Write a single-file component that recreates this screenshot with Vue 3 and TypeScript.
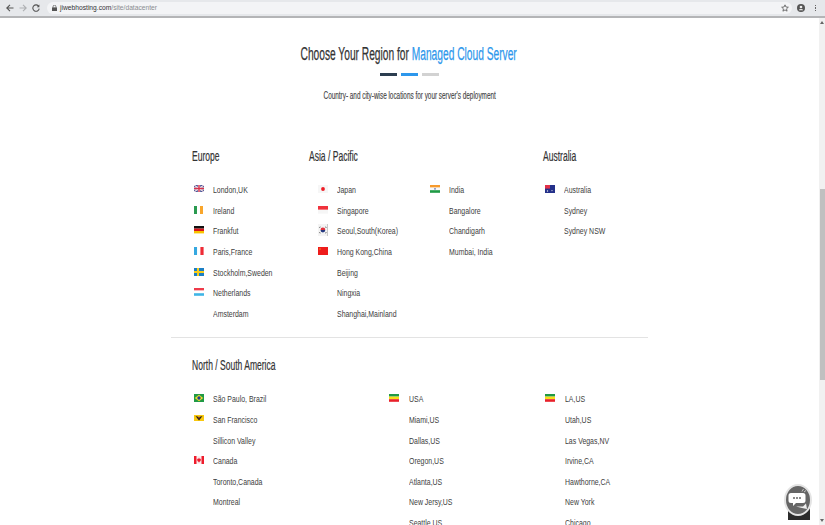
<script setup lang="ts">
type Shape = [string, string]
const rect = (x: number, y: number, w: number, h: number) => `M${x} ${y}h${w}v${h}h${-w}z`
const disc = (cx: number, cy: number, r: number) => `M${cx - r} ${cy}a${r} ${r} 0 1 0 ${r * 2} 0a${r} ${r} 0 1 0 ${-r * 2} 0z`

const flags: Record<string, Shape[]> = {
  uk: [
    ['#3f4f94', rect(0, 0, 10, 7)],
    ['#f4dfe4', 'M0 0l1 0 9 6.2v.8h-1L0 .8zM10 0v.8L1 7H0v-.8L9 0z'],
    ['#f4e6ea', rect(3.8, 0, 2.4, 7)],
    ['#f4e6ea', rect(0, 2.3, 10, 2.4)],
    ['#d8324a', rect(4.3, 0, 1.4, 7)],
    ['#d8324a', rect(0, 2.8, 10, 1.4)]
  ],
  ie: [
    ['#2a9a50', rect(0, 0, 3, 8)],
    ['#ffffff', rect(3, 0, 3, 8)],
    ['#f9a62b', rect(6, 0, 3, 8)]
  ],
  de: [
    ['#111111', rect(0, 0, 10, 2.6)],
    ['#d8141c', rect(0, 2.6, 10, 2.4)],
    ['#f8c400', rect(0, 5, 10, 2.4)]
  ],
  fr: [
    ['#35a8e0', rect(0, 0, 3.2, 8)],
    ['#ffffff', rect(3.2, 0, 3.2, 8)],
    ['#ee2b36', rect(6.4, 0, 3.2, 8)]
  ],
  se: [
    ['#1c7fc4', rect(0, 0, 10, 8)],
    ['#f8cd1c', rect(3, 0, 2, 8)],
    ['#f8cd1c', rect(0, 3, 10, 2)]
  ],
  lu: [
    ['#ee3b4a', rect(0, 0, 10, 2.6)],
    ['#ffffff', rect(0, 2.6, 10, 2.6)],
    ['#3fb5e6', rect(0, 5.2, 10, 2.6)]
  ],
  jp: [
    ['#f6f6f6', rect(0, 0, 10, 8)],
    ['#ee1c25', disc(5, 4, 1.9)]
  ],
  sg: [
    ['#f0323c', rect(0, 0, 10, 3.8)],
    ['#f6f6f6', rect(0, 3.8, 10, 3.8)]
  ],
  kr: [
    ['#f4f4f4', rect(0, 0, 9, 12)],
    ['#c9c9c9', rect(9, 0, 1, 12)],
    ['#e0303c', 'M2.5 6a2.4 2.4 0 0 1 4.8 0z'],
    ['#24387f', 'M2.5 6a2.4 2.4 0 0 0 4.8 0z'],
    ['#555555', 'M1 3.5l1.2-1 .5.5-1.2 1zM7 3l.5-.5 1.2 1-.5.5zM1 8.5l.5-.5 1.2 1-.5.5zM7 9l1.2-1 .5.5-1.2 1z']
  ],
  cn: [
    ['#ee1c1c', rect(0, 0, 10, 8)],
    ['#f6a81c', disc(2, 2, .7)]
  ],
  in: [
    ['#f79a2c', rect(0, 0, 10, 2.6)],
    ['#f8f8f8', rect(0, 2.6, 10, 2.6)],
    ['#1f9a45', rect(0, 5.2, 10, 2.6)],
    ['#5566aa', disc(5, 3.9, .8)]
  ],
  au: [
    ['#24308a', rect(0, 0, 10, 8)],
    ['#e03048', rect(0, 0, 5, 3.6)],
    ['#e8e8f0', disc(7, 5.6, .6)],
    ['#e8e8f0', disc(2.5, 6, .7)]
  ],
  br: [
    ['#1f9a45', rect(0, 0, 10, 8)],
    ['#f4dc2c', 'M5 .8 9.2 4 5 7.2.8 4z'],
    ['#1d3f8f', disc(5, 4, 1.7)]
  ],
  ca: [
    ['#ee1c2c', rect(0, 0, 10, 8)],
    ['#fbeff0', rect(2.5, 0, 5, 8)],
    ['#ee1c2c', 'M5 1.5 5.8 3 7 2.7 6.5 4.4l.5.4L5.2 6v.8h-.4V6L3 4.8l.5-.4L3 2.7 4.2 3z']
  ],
  us: [
    ['#1f9a45', rect(0, 0, 10, 2.6)],
    ['#f7e017', rect(0, 2.6, 10, 2.6)],
    ['#e8202a', rect(0, 5.2, 10, 2.6)]
  ],
  sf: [
    ['#f9c80e', rect(0, 0, 10, 6)],
    ['#222222', 'M1.5 1 5 2 8.500 1 6.600 3.400 5 5.500 3.400 3.400z'],
    ['#c8501c', rect(4.3, 2, 1.4, 1.2)]
  ]
}

interface Place { name: string; flag?: string }
const list = (...items: (string | [string, string])[]): Place[] =>
  items.map((i) => (Array.isArray(i) ? { name: i[0], flag: i[1] } : { name: i }))

const regionsTop = [
  {
    title: 'Europe',
    kind: 'europe',
    lists: [list(['London,UK', 'uk'], ['Ireland', 'ie'], ['Frankfut', 'de'], ['Paris,France', 'fr'], ['Stockholm,Sweden', 'se'], ['Netherlands', 'lu'], 'Amsterdam')]
  },
  {
    title: 'Asia / Pacific',
    kind: 'asia',
    lists: [
      list(['Japan', 'jp'], ['Singapore', 'sg'], ['Seoul,South(Korea)', 'kr'], ['Hong Kong,China', 'cn'], 'Beijing', 'Ningxia', 'Shanghai,Mainland'),
      list(['India', 'in'], 'Bangalore', 'Chandigarh', 'Mumbai, India')
    ]
  },
  {
    title: 'Australia',
    kind: 'oz',
    lists: [list(['Australia', 'au'], 'Sydney', 'Sydney NSW')]
  }
]

const americas = [
  list(['São Paulo, Brazil', 'br'], ['San Francisco', 'sf'], 'Sillicon Valley', ['Canada', 'ca'], 'Toronto,Canada', 'Montreal'),
  list(['USA', 'us'], 'Miami,US', 'Dallas,US', 'Oregon,US', 'Atlanta,US', 'New Jersy,US', 'Seattle,US'),
  list(['LA,US', 'us'], 'Utah,US', 'Las Vegas,NV', 'Irvine,CA', 'Hawthorne,CA', 'New York', 'Chicago')
]
</script>

<template>
  <div class="window">
    <header class="chrome">
      <svg class="nav" width="8" height="8" viewBox="0 0 8 8"><path d="M7.5 4H1M4 .8.8 4 4 7.2" fill="none" stroke="#555" stroke-width="1.1" /></svg>
      <svg class="nav" width="8" height="8" viewBox="0 0 8 8"><path d="M.5 4H7M4 .8 7.2 4 4 7.2" fill="none" stroke="#aeb0b3" stroke-width="1.1" /></svg>
      <svg class="nav" width="8" height="8" viewBox="0 0 8 8"><path d="M6.8 2.4A3.2 3.2 0 1 0 7.2 4.6" fill="none" stroke="#555" stroke-width="1.1" /><path d="M7.4.6v2.6H4.8z" fill="#555" /></svg>
      <div class="omnibox">
        <svg class="lock" width="5" height="6" viewBox="0 0 5 6"><path d="M0 2.4h5V6H0z" fill="#555" /><path d="M1.1 2.6V1.6a1.4 1.4 0 0 1 2.8 0v1" fill="none" stroke="#555" stroke-width=".7" /></svg>
        <span class="url">jiwebhosting.com<span class="path">/site/datacenter</span></span>
        <svg class="star" width="8" height="8" viewBox="0 0 24 24"><path d="M12 2.5l2.9 6.5 7.1.7-5.4 4.7 1.6 7L12 17.8 5.800 21.500l1.600-7L2 9.700 9.100 9z" fill="none" stroke="#555" stroke-width="2.400" /></svg>
      </div>
      <svg class="avatar" width="8" height="8" viewBox="0 0 8 8"><circle cx="4" cy="4" r="4" fill="#555" /><circle cx="4" cy="3" r="1.300" fill="#eee" /><path d="M1.700 6.200a2.400 1.800 0 0 1 4.600 0z" fill="#eee" /></svg>
      <div class="menu"><i></i><i></i><i></i></div>
    </header>

    <div class="viewport">
      <main class="page">
        <h1 class="title"><span class="squeeze">Choose Your Region for <span class="accent">Managed Cloud Server</span></span></h1>
        <div class="bars"><i class="dark"></i><i class="blue"></i><i class="light"></i></div>
        <p class="sub"><span class="squeeze">Country- and city-wise locations for your server's deployment</span></p>

        <div class="container">
          <section class="row top">
            <div v-for="r in regionsTop" :key="r.title" class="region" :class="r.kind">
              <h2 class="region-title"><span class="squeeze-left">{{ r.title }}</span></h2>
              <div class="lists">
                <ul v-for="(l, li) in r.lists" :key="li" class="places">
                  <li v-for="p in l" :key="p.name" class="place">
                    <span class="flag-cell">
                      <svg v-if="p.flag" class="flag" width="10" :height="p.flag === 'kr' ? 12 : 8" :viewBox="p.flag === 'kr' ? '0 0 10 12' : '0 0 10 8'">
                        <path v-for="(s, si) in flags[p.flag]" :key="si" :fill="s[0]" :d="s[1]" />
                      </svg>
                    </span>
                    <span class="place-name">{{ p.name }}</span>
                  </li>
                </ul>
              </div>
            </div>
          </section>

          <hr class="rule" />

          <section class="row bottom">
            <h2 class="region-title"><span class="squeeze-left">North / South America</span></h2>
            <div class="america">
              <ul v-for="(l, li) in americas" :key="li" class="places">
                <li v-for="p in l" :key="p.name" class="place">
                  <span class="flag-cell">
                    <svg v-if="p.flag" class="flag" width="10" height="8" viewBox="0 0 10 8">
                      <path v-for="(s, si) in flags[p.flag]" :key="si" :fill="s[0]" :d="s[1]" />
                    </svg>
                  </span>
                  <span class="place-name">{{ p.name }}</span>
                </li>
              </ul>
            </div>
          </section>
        </div>
      </main>

      <aside class="scrollbar">
        <span class="arrow up"></span>
        <div class="track"><div class="thumb"></div></div>
        <span class="arrow down"></span>
      </aside>

      <div class="to-top"></div>
      <button class="chat" aria-label="Chat">
        <svg width="22" height="24" viewBox="0 0 22 24">
          <path d="M4 5h12a2.500 2.500 0 0 1 2.500 2.500v5a2.500 2.500 0 0 1-2.500 2.500H9l-3 3v-3H4a2.500 2.500 0 0 1-2.500-2.500v-5A2.500 2.500 0 0 1 4 5z" fill="#fff" />
          <circle cx="7" cy="10" r="1" fill="#666" /><circle cx="10" cy="10" r="1" fill="#666" /><circle cx="13" cy="10" r="1" fill="#666" />
          <path d="M9 18.500h7l3-3 1 5.500-5-1z" fill="#eee" />
          <path d="M15 3.500 16.500 1M17 4 19 2.500" stroke="#ddd" stroke-width=".8" />
        </svg>
      </button>
    </div>
  </div>
</template>

<style>
html, body { margin: 0; overflow: hidden; background: #fff; }
</style>

<style scoped>
.window {
  width: 825px;
  height: 525px;
  display: flex;
  flex-direction: column;
  overflow: hidden;
  font-family: "Liberation Sans", Arial, sans-serif;
  color: #444;
}
.chrome {
  flex: none;
  display: flex;
  align-items: center;
  gap: 5px;
  padding: 0 8px 0 6px;
  box-sizing: border-box;
  background: #e6e8eb;
  border-bottom: 2px solid #b4b5b7;
  height: 18px;
}
.nav { flex: none; }
.omnibox {
  flex: 1;
  height: 12px;
  margin-left: 2px;
  border-radius: 6px;
  background: #f3f4f6;
  display: flex;
  align-items: center;
  padding: 0 3px 0 5px;
  gap: 3px;
}
.lock { flex: none; }
.url { font-size: 6.700px; line-height: 14px; color: #333; flex: 1; height: 14px; }
.path { color: #8a8d90; }
.star { flex: none; }
.avatar { flex: none; }
.menu { display: flex; flex-direction: column; gap: 1px; width: 3px; margin-left: 4px; align-items: center; }
.menu i { width: 1.500px; height: 1.500px; background: #666; display: block; }

.viewport { position: relative; flex: 1; min-height: 0; display: flex; overflow: hidden; }
.page {
  flex: 1;
  min-width: 0;
  text-align: center;
}
.title {
  margin: 25px 0 0;
  padding-right: 2px;
  font-weight: 400;
  font-size: 18px;
  line-height: 22px;
  color: #333;
  white-space: nowrap;
}
.squeeze { display: inline-block; transform: scaleX(.567); -webkit-text-stroke: .25px currentColor; white-space: nowrap; }
.sub .squeeze { transform: scaleX(.608); -webkit-text-stroke: .15px currentColor; }
.accent { color: #2d97ec; }
.bars { display: flex; justify-content: center; gap: 4px; margin-top: 8px; }
.bars i { display: block; width: 17px; height: 3px; }
.dark { background: #2c3e50; }
.blue { background: #2d97ec; }
.light { background: #d2d2d2; }
.sub {
  margin: 12px 0 0;
  font-size: 10.500px;
  line-height: 14px;
  color: #444;
}
.container { width: 477px; margin: 0 auto; text-align: left; }
.row.top { display: grid; grid-template-columns: 117px 234px 1fr; padding-left: 21px; margin-top: 45px; }
.region-title {
  margin: 0;
  font-weight: 400;
  font-size: 14px;
  line-height: 18px;
  color: #333;
  white-space: nowrap;
}
.squeeze-left {
  display: inline-block;
  transform: scaleX(.61);
  transform-origin: left center;
  -webkit-text-stroke: .2px currentColor;
}
.lists { display: flex; margin-top: 15px; }
.places { list-style: none; margin: 0; padding: 0 0 0 2px; }
.asia .places { padding-left: 9px; width: 112px; box-sizing: border-box; }
.place {
  display: flex;
  align-items: center;
  height: 20.600px;
  font-size: 8.800px;
  color: #404040;
  white-space: nowrap;
}
.place-name { display: inline-block; transform: scaleX(.79); transform-origin: left center; }
.flag-cell { width: 19px; flex: none; display: flex; align-items: center; }
.flag { display: block; margin-bottom: 2px; }
.rule { margin: 12.500px 0 0 0; border: 0; height: 1px; background: #e3e3e3; }
.row.bottom { padding-left: 21px; margin-top: 18.500px; }
.america { display: grid; grid-template-columns: 195px 156px 1fr; margin-top: 15px; }
.america .places + .places .flag-cell { width: 20px; }
.scrollbar {
  width: 6px;
  flex: none;
  background: #f1f1f1;
  display: flex;
  flex-direction: column;
  align-items: center;
}
.arrow { width: 0; height: 0; border-left: 2px solid transparent; border-right: 2px solid transparent; margin: 3px 0; flex: none; }
.up { border-bottom: 3px solid #666; }
.down { border-top: 3px solid #666; }
.track { flex: 1; width: 100%; padding-top: 162px; box-sizing: border-box; }
.thumb { height: 191px; width: 5px; margin-left: .5px; background: #c0c0c0; }
.to-top { position: absolute; left: 788px; top: 485px; width: 22px; height: 17px; background: #2b2b2b; }
.chat {
  position: absolute;
  left: 784px;
  top: 466px;
  width: 28px;
  height: 32px;
  padding: 0;
  border: 2px solid #e4e4e4;
  border-radius: 50%;
  background: #666;
  display: flex;
  align-items: center;
  justify-content: center;
  box-sizing: border-box;
}
</style>
